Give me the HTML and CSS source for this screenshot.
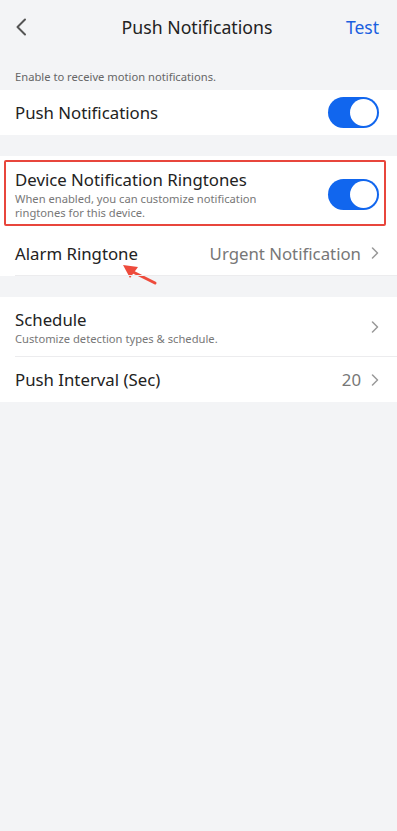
FILE: index.html
```html
<!DOCTYPE html>
<html lang="en">
<head>
    <meta charset="UTF-8">
    <meta name="viewport" content="width=device-width, initial-scale=1.0">
    <title>Push Notifications</title>
    <link rel="stylesheet" href="styles.css">
</head>
<body>
<div class="page">
    <div class="header">
        <span class="back">
            <svg width="12" height="18" viewBox="0 0 12 18"><path d="M10 1.5 L2.5 9 L10 16.5" fill="none" stroke="#555" stroke-width="2" stroke-linecap="round" stroke-linejoin="round"/></svg>
        </span>
        <span class="title">Push Notifications</span>
        <span class="action">Test</span>
    </div>

    <div class="caption">Enable to receive motion notifications.</div>

    <div class="group">
        <div class="row">
            <span class="label">Push Notifications</span>
            <span class="switch on"><span class="knob"></span></span>
        </div>
    </div>

    <div class="group gap">
        <div class="row tall marked">
            <div class="text">
                <div class="label">Device Notification Ringtones</div>
                <div class="sub">When enabled, you can customize notification ringtones for this device.</div>
            </div>
            <span class="switch on"><span class="knob"></span></span>
            <span class="highlight"></span>
        </div>
        <div class="row line alarm">
            <span class="label">Alarm Ringtone</span>
            <span class="value">Urgent Notification</span>
            <svg class="chev" width="8" height="12" viewBox="0 0 8 12"><path d="M1.5 1 L6.5 6 L1.5 11" fill="none" stroke="#999" stroke-width="1.5" stroke-linecap="round" stroke-linejoin="round"/></svg>
            <svg class="pointer" width="40" height="26" viewBox="0 0 40 26"><path d="M13 11 L35 22" stroke="#ee4b3c" stroke-width="3" stroke-linecap="round"/><path d="M3 4 L18 6 L10 17 Z" fill="#ee4b3c"/></svg>
        </div>
    </div>

    <div class="group gap">
        <div class="row tall line">
            <div class="text">
                <div class="label">Schedule</div>
                <div class="sub">Customize detection types &amp; schedule.</div>
            </div>
            <svg class="chev" width="8" height="12" viewBox="0 0 8 12"><path d="M1.5 1 L6.5 6 L1.5 11" fill="none" stroke="#999" stroke-width="1.5" stroke-linecap="round" stroke-linejoin="round"/></svg>
        </div>
        <div class="row">
            <span class="label">Push Interval (Sec)</span>
            <span class="value">20</span>
            <svg class="chev" width="8" height="12" viewBox="0 0 8 12"><path d="M1.5 1 L6.5 6 L1.5 11" fill="none" stroke="#999" stroke-width="1.5" stroke-linecap="round" stroke-linejoin="round"/></svg>
        </div>
    </div>
</div>
</body>
</html>
```

FILE: styles.css
```css
body {
    margin: 0;
    background: #f3f4f6;
    font-family: "Noto Sans", "Open Sans", sans-serif;
    color: #222;
}

.page {
    width: 397px;
    min-height: 831px;
}

.header {
    height: 54px;
    display: flex;
    align-items: center;
    justify-content: space-between;
    padding: 0 18px 0 15px;
}

.back {
    width: 40px;
    display: flex;
}

.title {
    font-size: 17.7px;
}

.action {
    width: 40px;
    text-align: right;
    font-size: 17.5px;
    color: #1a5fe0;
}

.caption {
    padding: 15px 15px 6px;
    font-size: 11.2px;
    line-height: 15px;
    color: #666;
}

.group {
    background: #fff;
}

.gap {
    margin-top: 21px;
}

.row {
    position: relative;
    display: flex;
    align-items: center;
    min-height: 45px;
    padding: 0 18px 0 15px;
}

.row.alarm {
    min-height: 46px;
    padding-top: 1px;
}

.row.tall {
    min-height: 60px;
}

.row.marked {
    padding-top: 8px;
    padding-bottom: 5px;
}

.row.line::after {
    content: "";
    position: absolute;
    left: 15px;
    right: 0;
    bottom: 0;
    border-bottom: 1px solid #ececee;
}

.label {
    font-size: 16.8px;
    line-height: 21px;
}

.text {
    flex: 1;
}

.row > .label {
    flex: 1;
}

.sub {
    font-size: 11.2px;
    line-height: 14px;
    color: #777;
    margin-top: 2px;
    max-width: 260px;
}

.value {
    font-size: 16.8px;
    color: #777;
    margin-right: 10px;
}

.chev {
    display: block;
}

.switch {
    width: 51px;
    height: 31px;
    border-radius: 16px;
    background: #ddd;
    position: relative;
    flex-shrink: 0;
}

.switch.on {
    background: #1166ee;
}

.knob {
    position: absolute;
    top: 2px;
    right: 2px;
    width: 27px;
    height: 27px;
    border-radius: 50%;
    background: #fff;
}

.highlight {
    position: absolute;
    left: 4px;
    right: 11px;
    top: 4px;
    bottom: 3px;
    border: 2px solid #e8463c;
    border-radius: 2px;
}

.pointer {
    position: absolute;
    left: 120px;
    top: 32px;
}
```
